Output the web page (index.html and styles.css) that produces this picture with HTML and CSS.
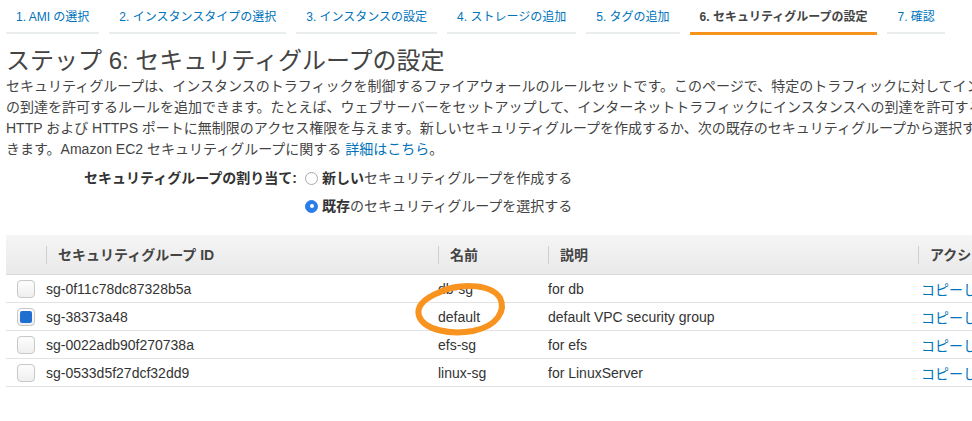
FILE: index.html
```html
<!DOCTYPE html>
<html lang="ja">
<head>
    <meta charset="UTF-8">
    <meta name="viewport" content="width=device-width, initial-scale=1.0">
    <title>ステップ 6: セキュリティグループの設定</title>
    <link rel="stylesheet" href="styles.css">
</head>
<body>
    <nav class="tabs">
        <a class="tab">1. AMI の選択</a>
        <a class="tab">2. インスタンスタイプの選択</a>
        <a class="tab">3. インスタンスの設定</a>
        <a class="tab">4. ストレージの追加</a>
        <a class="tab">5. タグの追加</a>
        <a class="tab active">6. セキュリティグループの設定</a>
        <a class="tab">7. 確認</a>
    </nav>

    <div class="content">
        <h1>ステップ 6: セキュリティグループの設定</h1>
        <p class="intro">
            セキュリティグループは、インスタンスのトラフィックを制御するファイアウォールのルールセットです。このページで、特定のトラフィックに対してインスタンスへ<br>
            の到達を許可するルールを追加できます。たとえば、ウェブサーバーをセットアップして、インターネットトラフィックにインスタンスへの到達を許可する場合、<br>
            HTTP および HTTPS ポートに無制限のアクセス権限を与えます。新しいセキュリティグループを作成するか、次の既存のセキュリティグループから選択することがで<br>
            きます。Amazon EC2 セキュリティグループに関する <a class="link">詳細はこちら</a>。
        </p>

        <div class="assign">
            <div class="assign-label">セキュリティグループの割り当て:</div>
            <label class="option"><span class="radio"></span><span><b>新しい</b>セキュリティグループを作成する</span></label>
            <div></div>
            <label class="option"><span class="radio checked"></span><span><b>既存</b>のセキュリティグループを選択する</span></label>
        </div>

        <div class="table-wrap">
            <table class="sg-table">
                <colgroup>
                    <col class="c-check">
                    <col class="c-id">
                    <col class="c-name">
                    <col class="c-desc">
                    <col class="c-action">
                </colgroup>
                <thead>
                    <tr>
                        <th></th>
                        <th><span>セキュリティグループ ID</span></th>
                        <th><span>名前</span></th>
                        <th><span>説明</span></th>
                        <th><span>アクション</span></th>
                    </tr>
                </thead>
                <tbody>
                    <tr>
                        <td class="check-cell"><span class="checkbox"></span></td>
                        <td>sg-0f11c78dc87328b5a</td>
                        <td>db-sg</td>
                        <td>for db</td>
                        <td class="action"><a class="link">コピーして新規作成</a></td>
                    </tr>
                    <tr>
                        <td class="check-cell"><span class="checkbox checked"></span></td>
                        <td>sg-38373a48</td>
                        <td>default</td>
                        <td>default VPC security group</td>
                        <td class="action"><a class="link">コピーして新規作成</a></td>
                    </tr>
                    <tr>
                        <td class="check-cell"><span class="checkbox"></span></td>
                        <td>sg-0022adb90f270738a</td>
                        <td>efs-sg</td>
                        <td>for efs</td>
                        <td class="action"><a class="link">コピーして新規作成</a></td>
                    </tr>
                    <tr>
                        <td class="check-cell"><span class="checkbox"></span></td>
                        <td>sg-0533d5f27dcf32dd9</td>
                        <td>linux-sg</td>
                        <td>for LinuxServer</td>
                        <td class="action"><a class="link">コピーして新規作成</a></td>
                    </tr>
                </tbody>
            </table>

            <!-- hand-drawn highlight around "default" -->
            <svg class="scribble" width="100" height="64" viewBox="0 0 100 64">
                <path d="M28 15 C45 6, 80 4, 90 20 C96 32, 88 48, 63 53 C40 57, 14 52, 9 38 C6 28, 15 20, 30 14 C36 11, 40 10, 46 9"
                      fill="none" stroke="#f7931e" stroke-width="6" stroke-linecap="round" stroke-linejoin="round"/>
            </svg>
        </div>
    </div>
</body>
</html>
```

FILE: styles.css
```css
body {
    margin: 0;
    font-family: "Liberation Sans", "Noto Sans CJK JP", sans-serif;
    color: #444;
    background-color: #fff;
    overflow: hidden;
    white-space: nowrap;
}
.tabs {
    display: flex;
    align-items: flex-start;
    gap: 10px;
    padding-left: 6px;
}
.tab {
    padding: 9px 10px 7px;
    font-size: 12px;
    line-height: 16px;
    color: #0073bb;
    border-bottom: 2px solid #eaeded;
}
.tab.active {
    color: #444;
    font-weight: bold;
    border-bottom: 3px solid #f7941d;
}
.content {
    padding-left: 6px;
}
h1 {
    margin: 11px 0 0;
    font-size: 24px;
    line-height: 30px;
    font-weight: normal;
    color: #444;
}
.intro {
    margin: 0;
    font-size: 14px;
    line-height: 21px;
    color: #444;
}
.link {
    color: #0073bb;
    cursor: pointer;
}
.assign {
    display: grid;
    grid-template-columns: 291px auto;
    column-gap: 8px;
    row-gap: 8px;
    margin-top: 8px;
    font-size: 14px;
    line-height: 20px;
}
.assign-label {
    text-align: right;
    font-weight: bold;
    color: #333;
}
.option {
    display: flex;
    align-items: center;
    gap: 4px;
    color: #444;
}
.option b {
    color: #333;
}
.radio {
    width: 11px;
    height: 11px;
    border: 1px solid #a9a9a9;
    border-radius: 50%;
    background: #fff;
    display: inline-block;
    position: relative;
}
.radio.checked {
    background: #2b7de9;
    border-color: #2b7de9;
}
.radio.checked::after {
    content: "";
    position: absolute;
    left: 3.5px;
    top: 3.5px;
    width: 4px;
    height: 4px;
    border-radius: 50%;
    background: #fff;
}
.table-wrap {
    position: relative;
    margin-top: 19px;
}
.sg-table {
    table-layout: fixed;
    width: 1080px;
    border-collapse: collapse;
    font-size: 14px;
}
.c-check { width: 40px; }
.c-id { width: 392px; }
.c-name { width: 110px; }
.c-desc { width: 370px; }
.c-action { width: 168px; }
.sg-table th {
    height: 39px;
    padding: 0;
    text-align: left;
    font-weight: bold;
    color: #444;
    background: linear-gradient(#f5f5f5, #e9e9e9);
    border-bottom: 1px solid #d9d9d9;
}
.sg-table th span {
    display: block;
    padding-left: 11px;
    border-left: 1px solid #cfcfcf;
    line-height: 18px;
}
.sg-table td {
    height: 27px;
    padding: 0;
    color: #333;
    border-bottom: 1px solid #e2e2e2;
}
.sg-table td.action {
    padding-left: 3px;
}
.check-cell {
    padding-left: 11px !important;
}
.checkbox {
    display: block;
    width: 16px;
    height: 16px;
    border: 1px solid #c8c8c8;
    border-radius: 4px;
    background: linear-gradient(#fdfdfd, #efefef);
    position: relative;
}
.checkbox.checked::after {
    content: "";
    position: absolute;
    left: 2px;
    top: 2px;
    width: 12px;
    height: 12px;
    border-radius: 2px;
    background: #1f6fd1;
}
.scribble {
    position: absolute;
    left: 404px;
    top: 43px;
}
```
